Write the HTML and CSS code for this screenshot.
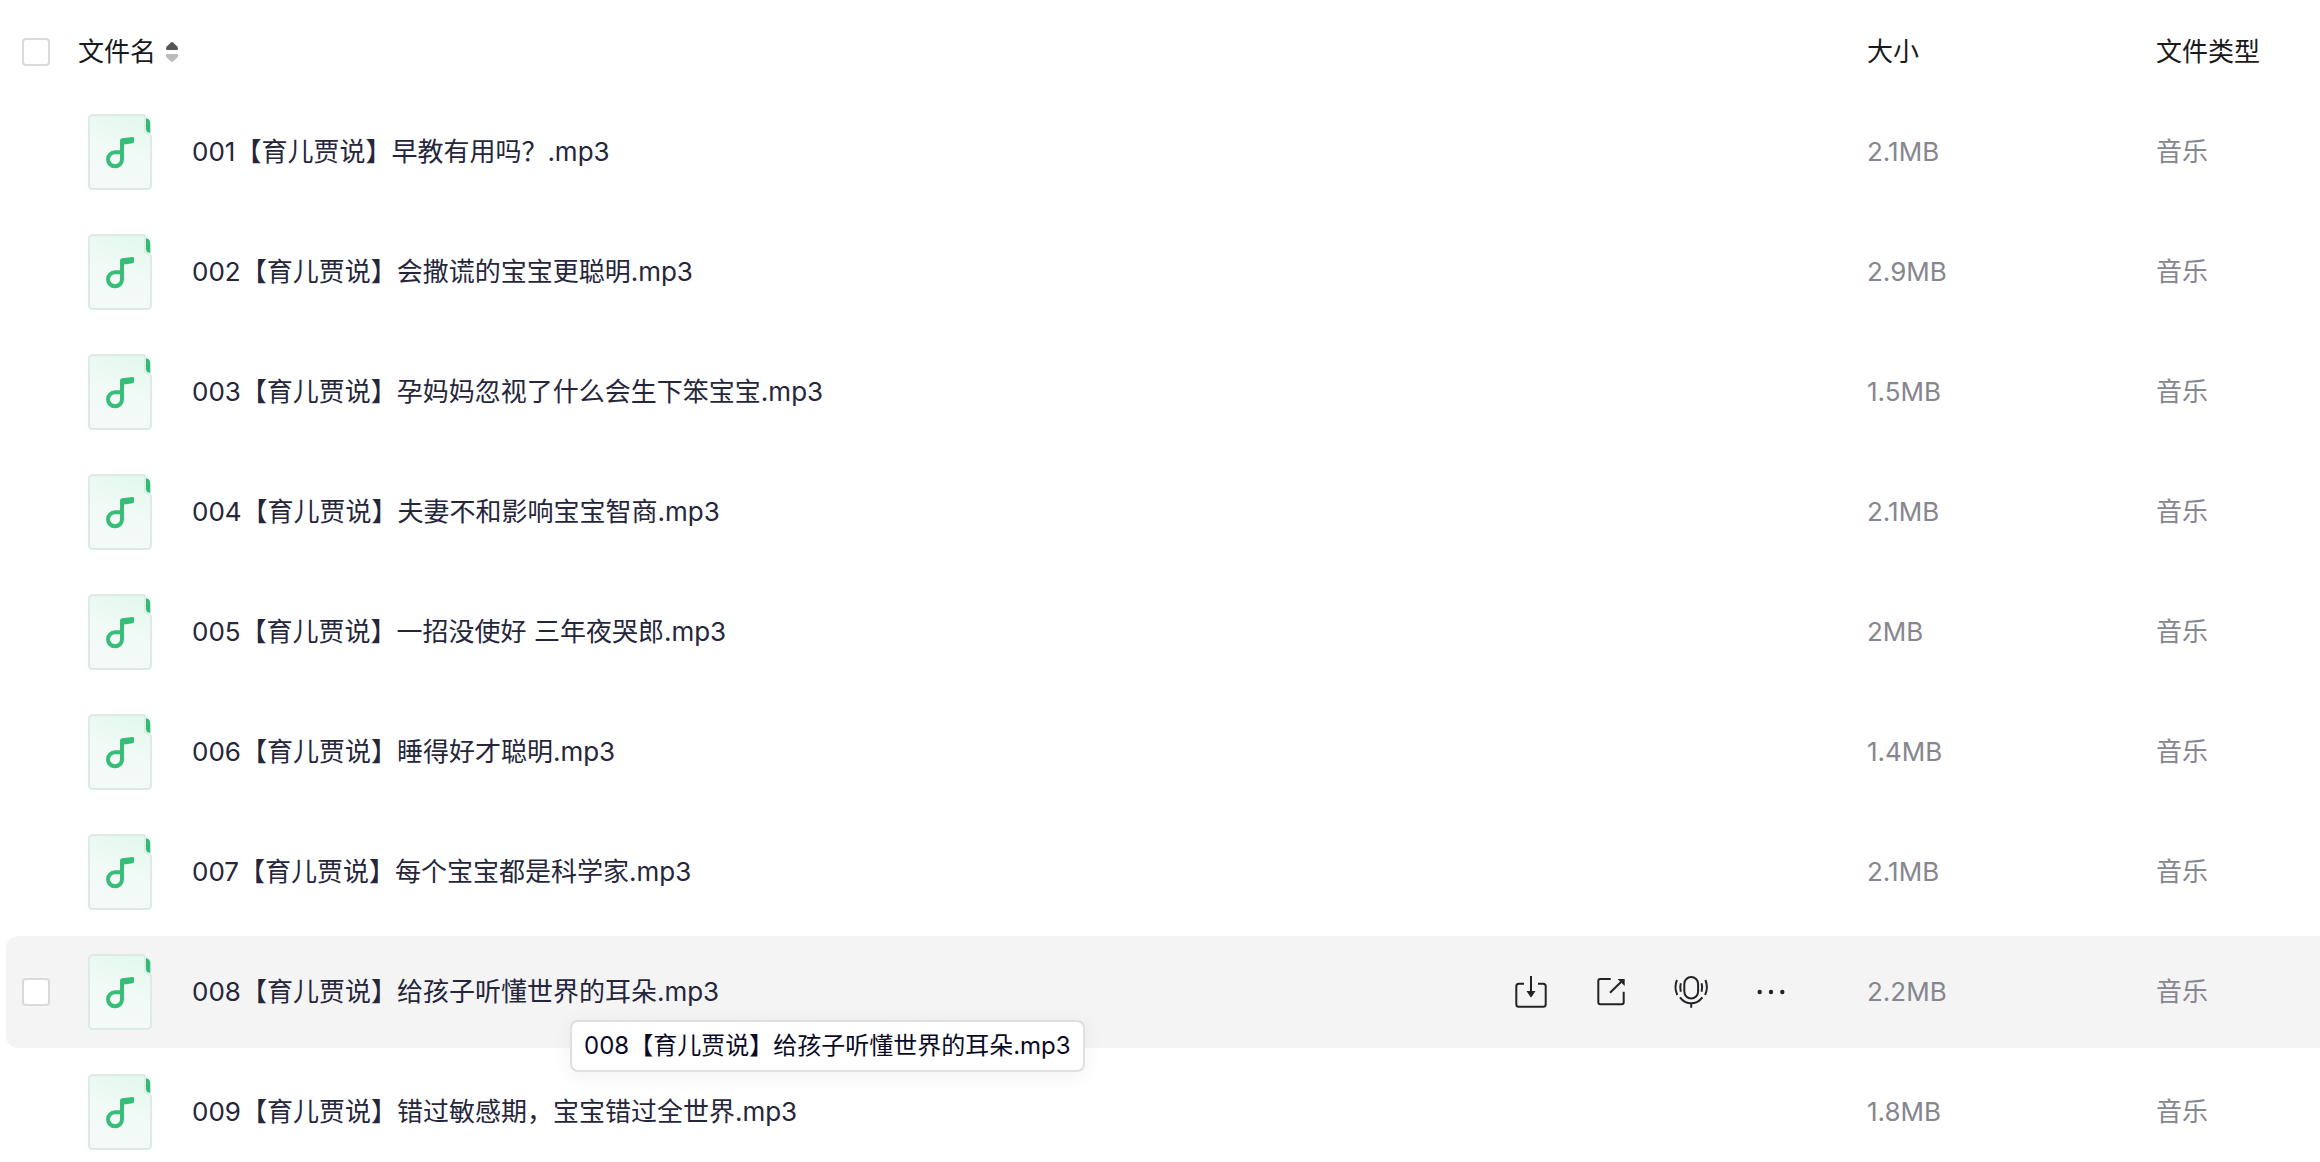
FILE: index.html
```html
<!DOCTYPE html>
<html lang="zh-CN">

<head>
    <meta charset="UTF-8">
    <meta name="viewport" content="width=device-width, initial-scale=1.0">
    <title>文件列表</title>
    <link rel="stylesheet" href="styles.css">
</head>

<body>
    <!-- shared file icon -->
    <svg class="sprite" width="0" height="0" aria-hidden="true">
        <defs>
            <linearGradient id="paper" x1="0.7" y1="0" x2="0.4" y2="1">
                <stop offset="0" stop-color="#e3f8ee" />
                <stop offset="0.5" stop-color="#f1faf6" />
                <stop offset="1" stop-color="#f4faf8" />
            </linearGradient>
        </defs>
        <symbol id="music" viewBox="0 0 64 76">
            <path d="M58 4C60.500 4.500 62.300 6.500 62.300 9V18.700H61C59 18.700 58 17 58 15Z" fill="#2fbd75" />
            <path d="M5 1H54Q57 1 57 4V15Q57 19 60 19.500Q63 20 63 23V71Q63 75 59 75H5Q1 75 1 71V5Q1 1 5 1Z"
                fill="url(#paper)" stroke="#dcece5" stroke-width="2" />
            <path d="M34 28V45.300A7 7 0 1 1 27 38.300H34" fill="none" stroke="#36bd78" stroke-width="4" />
            <path d="M32 26.500Q32 24.500 34 24.300L44.500 23Q46 22.900 46 24.400V27.500Q46 29 44.500 29.200L36 30.500V33H32Z" fill="#36bd78" />
        </symbol>
    </svg>

    <div class="file-list">
        <table>
            <colgroup>
                <col class="col-check">
                <col>
                <col class="col-size">
                <col class="col-type">
            </colgroup>
            <thead>
                <tr>
                    <th class="check"><input type="checkbox" aria-label="全选"></th>
                    <th>
                        <button class="sort">文件名
                            <svg width="12" height="22" viewBox="0 0 12 22">
                                <path d="M5 1.400Q6 0.500 7 1.400L11.300 5.500Q12 6.500 12 8Q12 9 11 9H1Q0 9 0 8Q0 6.500 0.700 5.500Z" fill="#555" />
                                <path d="M5 20.600Q6 21.500 7 20.600L11.300 16.500Q12 15.500 12 14Q12 13 11 13H1Q0 13 0 14Q0 15.500 0.700 16.500Z" fill="#bbb" />
                            </svg>
                        </button>
                    </th>
                    <th>大小</th>
                    <th>文件类型</th>
                </tr>
            </thead>
            <tbody>
                <tr>
                    <td class="check"></td>
                    <td>
                        <div class="name">
                            <svg class="file-icon"><use href="#music" /></svg>
                            <span>001【育儿贾说】早教有用吗？.mp3</span>
                        </div>
                    </td>
                    <td>2.1MB</td>
                    <td>音乐</td>
                </tr>
                <tr>
                    <td class="check"></td>
                    <td>
                        <div class="name">
                            <svg class="file-icon"><use href="#music" /></svg>
                            <span>002【育儿贾说】会撒谎的宝宝更聪明.mp3</span>
                        </div>
                    </td>
                    <td>2.9MB</td>
                    <td>音乐</td>
                </tr>
                <tr>
                    <td class="check"></td>
                    <td>
                        <div class="name">
                            <svg class="file-icon"><use href="#music" /></svg>
                            <span>003【育儿贾说】孕妈妈忽视了什么会生下笨宝宝.mp3</span>
                        </div>
                    </td>
                    <td>1.5MB</td>
                    <td>音乐</td>
                </tr>
                <tr>
                    <td class="check"></td>
                    <td>
                        <div class="name">
                            <svg class="file-icon"><use href="#music" /></svg>
                            <span>004【育儿贾说】夫妻不和影响宝宝智商.mp3</span>
                        </div>
                    </td>
                    <td>2.1MB</td>
                    <td>音乐</td>
                </tr>
                <tr>
                    <td class="check"></td>
                    <td>
                        <div class="name">
                            <svg class="file-icon"><use href="#music" /></svg>
                            <span>005【育儿贾说】一招没使好 三年夜哭郎.mp3</span>
                        </div>
                    </td>
                    <td>2MB</td>
                    <td>音乐</td>
                </tr>
                <tr>
                    <td class="check"></td>
                    <td>
                        <div class="name">
                            <svg class="file-icon"><use href="#music" /></svg>
                            <span>006【育儿贾说】睡得好才聪明.mp3</span>
                        </div>
                    </td>
                    <td>1.4MB</td>
                    <td>音乐</td>
                </tr>
                <tr>
                    <td class="check"></td>
                    <td>
                        <div class="name">
                            <svg class="file-icon"><use href="#music" /></svg>
                            <span>007【育儿贾说】每个宝宝都是科学家.mp3</span>
                        </div>
                    </td>
                    <td>2.1MB</td>
                    <td>音乐</td>
                </tr>
                <tr class="active">
                    <td class="check"><input type="checkbox" aria-label="选择 008"></td>
                    <td>
                        <div class="name">
                            <svg class="file-icon"><use href="#music" /></svg>
                            <span>008【育儿贾说】给孩子听懂世界的耳朵.mp3</span>
                            <div class="actions">
                                <button aria-label="下载">
                                    <svg viewBox="0 0 32 32">
                                        <path d="M9 7.700H3.800Q1.300 7.700 1.300 10.200V28.200Q1.300 30.700 3.800 30.700H28.200Q30.700 30.700 30.700 28.200V10.200Q30.700 7.700 28.200 7.700H23M16 0V17" />
                                        <path class="solid" d="M11.500 15H20.500L16.700 20.800Q16 21.800 15.300 20.800Z" />
                                    </svg>
                                </button>
                                <button aria-label="分享">
                                    <svg viewBox="0 0 32 32">
                                        <path d="M15.700 3H5.300Q3.300 3 3.300 5V26.300Q3.300 28.300 5.300 28.300H26.700Q28.700 28.300 28.700 26.300V15.700M15 16.700L27 5" />
                                        <path class="solid" d="M22.500 3H29.700V10Z" />
                                    </svg>
                                </button>
                                <button aria-label="语音">
                                    <svg viewBox="0 0 32 32">
                                        <rect x="9.300" y="1" width="13.800" height="21.500" rx="6.900" />
                                        <path d="M5.800 7.300Q4.600 11.500 5.800 15.700M26.600 7.300Q27.800 11.500 26.600 15.700M2 4Q-1.200 11.500 2.300 19M30.400 4Q33.600 11.500 30.100 19M5 21.300Q9.500 27.300 16.200 27.300Q22.900 27.300 27.400 21.300M16.200 27.300V31.700" />
                                    </svg>
                                </button>
                                <button aria-label="更多">
                                    <svg viewBox="0 0 32 32">
                                        <g class="solid">
                                            <circle cx="4.700" cy="16" r="2.200" />
                                            <circle cx="16" cy="16" r="2.200" />
                                            <circle cx="27.300" cy="16" r="2.200" />
                                        </g>
                                    </svg>
                                </button>
                            </div>
                            <div class="tooltip" role="tooltip">008【育儿贾说】给孩子听懂世界的耳朵.mp3</div>
                        </div>
                    </td>
                    <td>2.2MB</td>
                    <td>音乐</td>
                </tr>
                <tr>
                    <td class="check"></td>
                    <td>
                        <div class="name">
                            <svg class="file-icon"><use href="#music" /></svg>
                            <span>009【育儿贾说】错过敏感期，宝宝错过全世界.mp3</span>
                        </div>
                    </td>
                    <td>1.8MB</td>
                    <td>音乐</td>
                </tr>
            </tbody>
        </table>
    </div>
</body>

</html>
```
FILE: styles.css
```css
body {
    margin: 0;
    background-color: #fff;
    font-family: Inter, "Noto Sans CJK SC", sans-serif;
    font-size: 26px;
    line-height: 36px;
    color: #25263b;
}

.sprite {
    position: absolute;
}

.file-list {
    height: 100vh;
    padding-left: 6px;
    box-sizing: border-box;
    overflow: hidden;
}

table {
    width: 100%;
    table-layout: fixed;
    border-collapse: separate;
    border-spacing: 0 8px;
}

.col-check {
    width: 72px;
}

.col-size {
    width: 289px;
}

.col-type {
    width: 164px;
}

th,
td {
    padding: 0;
    text-align: left;
    vertical-align: middle;
    white-space: nowrap;
}

th {
    height: 72px;
    padding-top: 8px;
    font-weight: 400;
    color: #1a1a1c;
}

td {
    height: 112px;
    color: #85868f;
}

.check {
    padding-left: 16px;
}

.active td {
    background-color: #f4f4f4;
}

.active .check {
    border-radius: 12px 0 0 12px;
}

input[type="checkbox"] {
    appearance: none;
    display: block;
    box-sizing: border-box;
    width: 28px;
    height: 28px;
    margin: 0;
    background-color: #fff;
    border: 2px solid #dadada;
    border-radius: 4px;
}

button {
    padding: 0;
    background: none;
    border: none;
    font: inherit;
    color: inherit;
    cursor: pointer;
}

.sort {
    display: flex;
    align-items: center;
    gap: 10px;
}

.name {
    position: relative;
    display: flex;
    align-items: center;
    gap: 40px;
    padding: 0 80px 0 10px;
    color: #25263b;
}

.file-icon {
    width: 64px;
    height: 76px;
}

.actions {
    display: flex;
    gap: 48px;
    margin-left: auto;
}

.actions svg {
    display: block;
    width: 32px;
    height: 32px;
    overflow: visible;
    fill: none;
    stroke: #222326;
    stroke-width: 2;
}

.actions .solid {
    fill: #222326;
    stroke: none;
}

.tooltip {
    position: absolute;
    top: 66px;
    left: 492px;
    z-index: 1;
    padding: 6px 12px;
    background-color: #fff;
    border: 2px solid #dedfe0;
    border-radius: 8px;
    box-shadow: 0 4px 20px rgba(0, 0, 0, 0.06);
    font-size: 24px;
    color: #0a0a26;
}
```
